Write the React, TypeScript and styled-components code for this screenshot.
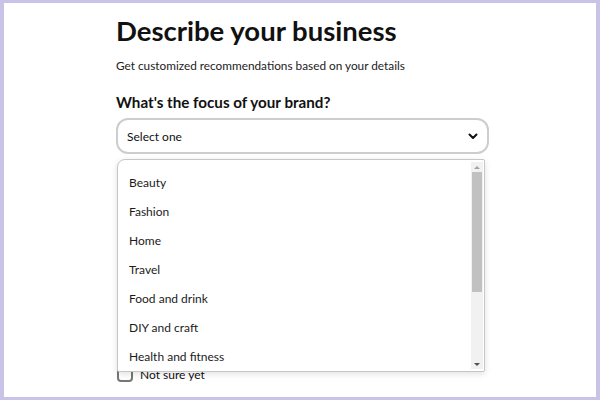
import React from "react";
import styled, { createGlobalStyle } from "styled-components";

const GlobalStyle = createGlobalStyle`
  html, body {
    margin: 0;
    padding: 0;
    background: #ffffff;
  }
  body {
    font-family: Lato, "Noto Sans", "Liberation Sans", sans-serif;
    color: #111111;
  }
`;

const Frame = styled.div`
  box-sizing: border-box;
  width: 600px;
  height: 400px;
  border-style: solid;
  border-color: #c9c3e7;
  border-width: 3px 4px 3px 4px;
  overflow: hidden;
`;

const Column = styled.div`
  position: relative;
  width: 373px;
  margin-left: 112px;
  padding-top: 11px;
  display: flex;
  flex-direction: column;
`;

const Heading = styled.h1`
  margin: 0;
  font-size: 27.5px;
  line-height: 34px;
  font-weight: 700;
  color: #111111;
`;

const Subtitle = styled.p`
  margin: 10px 0 0;
  font-size: 11.8px;
  line-height: 16px;
  color: #222222;
`;

const Label = styled.div`
  margin-top: 18px;
  font-size: 15.2px;
  line-height: 20px;
  font-weight: 700;
`;

const SelectBox = styled.div`
  box-sizing: border-box;
  margin-top: 6px;
  height: 36px;
  border: 2px solid #cdcdcd;
  border-radius: 12px;
  display: flex;
  align-items: center;
  justify-content: space-between;
  padding: 0 8px 0 9px;
  font-size: 12px;
  color: #111111;
`;

const Chevron = () => (
  <svg width="12" height="12" viewBox="0 0 12 12">
    <path d="M2.5 4.5 L6 8 L9.5 4.5" fill="none" stroke="#111" strokeWidth="2" strokeLinecap="round" strokeLinejoin="round" />
  </svg>
);

const Menu = styled.div`
  position: absolute;
  left: 1px;
  top: 156px;
  width: 368px;
  height: 213px;
  box-sizing: border-box;
  background: #ffffff;
  border: 1px solid #c6c6c6;
  border-radius: 8px 2px 2px 2px;
  box-shadow: 0 2px 6px rgba(0, 0, 0, 0.12);
  display: flex;
  overflow: hidden;
`;

const Options = styled.ul`
  flex: 1;
  list-style: none;
  margin: 0;
  padding: 8px 0 0;
`;

const Option = styled.li`
  height: 29px;
  display: flex;
  align-items: center;
  padding-left: 11px;
  font-size: 12px;
  color: #1b1b1b;
`;

const Scrollbar = styled.div`
  width: 12px;
  margin: 2px 1px 2px 0;
  background: #f1f1f1;
  display: flex;
  flex-direction: column;
  align-items: stretch;
`;

const Arrow = styled.div<{ $down?: boolean }>`
  height: 10px;
  display: flex;
  align-items: center;
  justify-content: center;
  &::before {
    content: "";
    border-left: 3px solid transparent;
    border-right: 3px solid transparent;
    ${(p) => (p.$down ? "border-top: 3px solid #505050;" : "border-bottom: 3px solid #a3a3a3;")}
  }
`;

const Thumb = styled.div`
  margin: 0 1px;
  height: 120px;
  background: #c1c1c1;
`;

const Spacer = styled.div`
  flex: 1;
`;

const CheckRow = styled.label`
  margin-top: 212px;
  display: flex;
  align-items: center;
  gap: 7px;
  font-size: 12px;
  color: #111111;
`;

const Box = styled.span`
  box-sizing: border-box;
  width: 16px;
  height: 16px;
  border: 2px solid #767676;
  border-radius: 4px;
  margin-left: 1px;
`;

const options = [
  "Beauty",
  "Fashion",
  "Home",
  "Travel",
  "Food and drink",
  "DIY and craft",
  "Health and fitness",
];

export default function App() {
  return (
    <>
      <GlobalStyle />
      <Frame>
        <Column>
          <Heading>Describe your business</Heading>
          <Subtitle>Get customized recommendations based on your details</Subtitle>
          <Label>What's the focus of your brand?</Label>
          <SelectBox>
            <span>Select one</span>
            <Chevron />
          </SelectBox>
          <CheckRow>
            <Box />
            Not sure yet
          </CheckRow>
          <Menu>
            <Options>
              {options.map((o) => (
                <Option key={o}>{o}</Option>
              ))}
            </Options>
            <Scrollbar>
              <Arrow />
              <Thumb />
              <Spacer />
              <Arrow $down />
            </Scrollbar>
          </Menu>
        </Column>
      </Frame>
    </>
  );
}
